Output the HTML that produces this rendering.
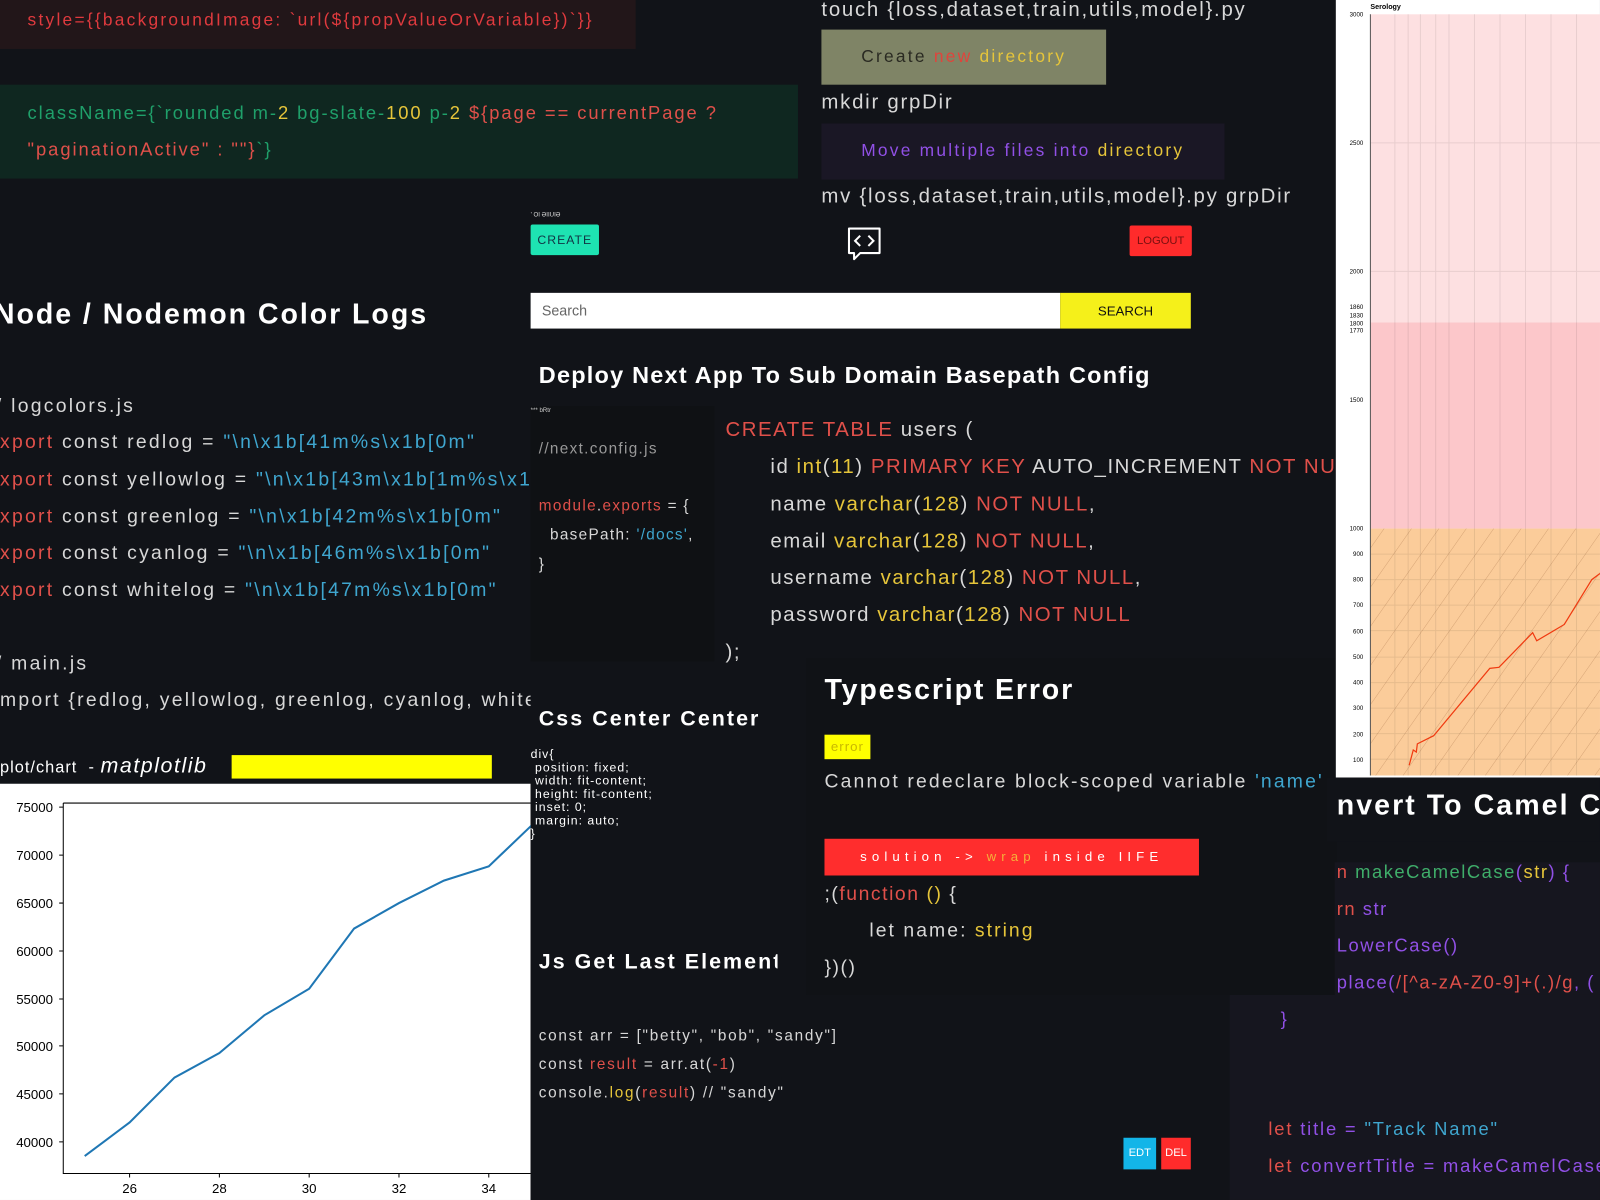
<!DOCTYPE html>
<html><head><meta charset="utf-8"><style>
html,body{margin:0;padding:0;background:#111318;width:1600px;height:1200px;overflow:hidden}
#w{position:absolute;left:0;top:0;width:1568px;height:1176px;transform:scale(1.0204);transform-origin:0 0;font-family:"Liberation Sans",sans-serif;color:#d8d8d8}
.a{position:absolute;white-space:nowrap}
.t{position:absolute;white-space:nowrap;transform:translateY(-50%)}
.r{color:#e0504a}.y{color:#e6c53a}.c{color:#3fa6cf}.g{color:#3fae6a}.p{color:#9150e6}
.code{font-size:19px;letter-spacing:1.5px}
</style></head><body><div id="w">
<div class="a" style="left:0;top:0;width:623px;height:48px;background:#221619"></div>
<div class="t" style="left:27px;top:20px;font-size:17px;letter-spacing:2.2px;color:#e03a3e">style={{backgroundImage: `url(${propValueOrVariable})`}}</div>
<div class="a" style="left:0;top:83px;width:782px;height:92px;background:#0f2720"></div>
<div class="t" style="left:27px;top:111px;font-size:18px;letter-spacing:1.9px;color:#1fa06a">className={`rounded m-<span class="y">2</span> bg-slate-<span class="y">100</span> p-<span class="y">2</span> <span class="r">${page == currentPage ?</span></div>
<div class="t r" style="left:27px;top:147px;font-size:18px;letter-spacing:1.9px">"paginationActive" : ""}<span style="color:#1fa06a">`}</span></div>
<div class="t code" style="left:805px;top:10px;font-size:20px;letter-spacing:1.7px">touch {loss,dataset,train,utils,model}.py</div>
<div class="a" style="left:805px;top:29px;width:279px;height:54px;background:#7f8466"></div>
<div class="t" style="left:844px;top:56px;font-size:17px;letter-spacing:2.2px;color:#2a2a22">Create <span style="color:#e0443c">new</span> <span class="y">directory</span></div>
<div class="t code" style="left:805px;top:101px;font-size:20px;letter-spacing:1.7px">mkdir grpDir</div>
<div class="a" style="left:805px;top:121px;width:395px;height:55px;background:#1a1725"></div>
<div class="t p" style="left:844px;top:148px;font-size:17px;letter-spacing:2.2px">Move multiple files into <span class="y">directory</span></div>
<div class="t code" style="left:805px;top:193px;font-size:20px;letter-spacing:1.7px">mv {loss,dataset,train,utils,model}.py grpDir</div>
<div class="a" style="left:520px;top:208px;font-size:6px;color:#ddd">' OI ƏIIUIƏ</div>
<div class="a" style="left:520px;top:220px;width:67px;height:30px;background:#1ee3b2;border-radius:2px;color:#134;font-size:12px;letter-spacing:1px;line-height:30px;text-align:center">CREATE</div>
<svg class="a" style="left:829px;top:222px" width="36" height="36" viewBox="0 0 36 36"><path d="M3 2h30v24H14l-6 6v-6H3z" fill="none" stroke="#fff" stroke-width="2" stroke-linejoin="round"/><path d="M14 9l-5 5 5 5M22 9l5 5-5 5" fill="none" stroke="#fff" stroke-width="2"/></svg>
<div class="a" style="left:1107px;top:221px;width:61px;height:30px;background:#ff2b2b;border-radius:2px;color:#7a1010;font-size:11px;line-height:30px;text-align:center">LOGOUT</div>
<div class="a" style="left:520px;top:287px;width:519px;height:35px;background:#fff;color:#666;font-size:14px;line-height:35px;text-indent:11px">Search</div>
<div class="a" style="left:1039px;top:287px;width:128px;height:35px;background:#f5f01a;color:#111;font-size:13px;line-height:35px;text-align:center">SEARCH</div>
<div class="t" style="left:528px;top:368px;font-size:23px;font-weight:bold;letter-spacing:1.2px;color:#fff">Deploy Next App To Sub Domain Basepath Config</div>
<div class="a" style="left:520px;top:398px;width:180px;height:250px;background:#0f1114"></div>
<div class="a" style="left:520px;top:400px;font-size:6px;color:#ccc">*** bRtr</div>
<div class="t" style="left:528px;top:440px;font-size:15px;letter-spacing:1.3px;color:#999">//next.config.js</div>
<div class="t" style="left:528px;top:496px;font-size:15px;letter-spacing:1.3px"><span class="r">module</span>.<span class="r">exports</span> = {</div>
<div class="t" style="left:539px;top:524px;font-size:15px;letter-spacing:1.3px">basePath: <span class="c">'/docs'</span>,</div>
<div class="t" style="left:528px;top:553px;font-size:15px">}</div>
<div class="t code" style="left:711px;top:422px;font-size:20px"><span class="r">CREATE TABLE</span> users (</div>
<div class="t code" style="left:755px;top:458px;font-size:20px">id <span class="y">int</span>(<span class="y">11</span>) <span class="r">PRIMARY KEY</span> AUTO_INCREMENT <span class="r">NOT NULL</span></div>
<div class="t code" style="left:755px;top:495px;font-size:20px">name <span class="y">varchar</span>(<span class="y">128</span>) <span class="r">NOT NULL</span>,</div>
<div class="t code" style="left:755px;top:531px;font-size:20px">email <span class="y">varchar</span>(<span class="y">128</span>) <span class="r">NOT NULL</span>,</div>
<div class="t code" style="left:755px;top:567px;font-size:20px">username <span class="y">varchar</span>(<span class="y">128</span>) <span class="r">NOT NULL</span>,</div>
<div class="t code" style="left:755px;top:603px;font-size:20px">password <span class="y">varchar</span>(<span class="y">128</span>) <span class="r">NOT NULL</span></div>
<div class="t code" style="left:711px;top:640px;font-size:20px">);</div>
<div class="t" style="left:-6px;top:308px;font-size:28px;font-weight:bold;letter-spacing:1.9px;color:#fff">Node / Nodemon Color Logs</div>
<div class="t code" style="left:-4px;top:399px;letter-spacing:2.2px">/ logcolors.js</div>
<div class="t code" style="left:0;top:434px;letter-spacing:2.2px"><span class="r">xport</span> const redlog = <span class="c">"\n\x1b[41m%s\x1b[0m"</span></div>
<div class="t code" style="left:0;top:471px;letter-spacing:2.2px"><span class="r">xport</span> const yellowlog = <span class="c">"\n\x1b[43m\x1b[1m%s\x1</span></div>
<div class="t code" style="left:0;top:507px;letter-spacing:2.2px"><span class="r">xport</span> const greenlog = <span class="c">"\n\x1b[42m%s\x1b[0m"</span></div>
<div class="t code" style="left:0;top:543px;letter-spacing:2.2px"><span class="r">xport</span> const cyanlog = <span class="c">"\n\x1b[46m%s\x1b[0m"</span></div>
<div class="t code" style="left:0;top:579px;letter-spacing:2.2px"><span class="r">xport</span> const whitelog = <span class="c">"\n\x1b[47m%s\x1b[0m"</span></div>
<div class="t code" style="left:-4px;top:651px;letter-spacing:2.2px">/ main.js</div>
<div class="t code" style="left:0;top:687px;width:520px;overflow:hidden;letter-spacing:2.2px">mport {redlog, yellowlog, greenlog, cyanlog, white</div>
<div class="t" style="left:0;top:751px;font-size:16px;letter-spacing:1px;color:#fff">plot/chart &nbsp;- <i style="font-size:21px;letter-spacing:1.5px">matplotlib</i></div>
<div class="a" style="left:227px;top:740px;width:255px;height:23px;background:#ffff00"></div>
<svg class="a" style="left:0;top:768px" width="520" height="408" viewBox="0 768 520 408">
<rect x="0" y="768" width="520" height="408" fill="#fff"/>
<path d="M62 787V1150H520M62 787H520" fill="none" stroke="#000" stroke-width="1"/>
<g font-family="Liberation Sans" font-size="13" fill="#000" text-anchor="end">
<text x="52" y="796">75000</text><text x="52" y="843">70000</text><text x="52" y="890">65000</text><text x="52" y="937">60000</text><text x="52" y="984">55000</text><text x="52" y="1030">50000</text><text x="52" y="1077">45000</text><text x="52" y="1124">40000</text>
</g>
<g stroke="#000"><path d="M58 791H62M58 838H62M58 885H62M58 932H62M58 979H62M58 1025H62M58 1072H62M58 1119H62M127 1150v4M215 1150v4M303 1150v4M391 1150v4M479 1150v4"/></g>
<g font-family="Liberation Sans" font-size="13" text-anchor="middle"><text x="127" y="1169">26</text><text x="215" y="1169">28</text><text x="303" y="1169">30</text><text x="391" y="1169">32</text><text x="479" y="1169">34</text></g>
<polyline points="83,1133 127,1100 171,1056 215,1032 259,995 303,969 347,910 391,885 435,863 479,849 523,807" fill="none" stroke="#1f77b4" stroke-width="2"/>
</svg>
<div class="t" style="left:528px;top:705px;font-size:21px;font-weight:bold;letter-spacing:2px;color:#fff">Css Center Center</div>
<div class="a" style="left:520px;top:733px;font-size:12px;letter-spacing:1px;line-height:13px;color:#fff">div{<br>&nbsp;position: fixed;<br>&nbsp;width: fit-content;<br>&nbsp;height: fit-content;<br>&nbsp;inset: 0;<br>&nbsp;margin: auto;<br>}</div>
<div class="t" style="left:528px;top:943px;font-size:21px;font-weight:bold;letter-spacing:2px;color:#fff;width:234px;overflow:hidden">Js Get Last Element</div>
<div class="t" style="left:528px;top:1015px;font-size:15px;letter-spacing:1.7px">const arr = ["betty", "bob", "sandy"]</div>
<div class="t" style="left:528px;top:1043px;font-size:15px;letter-spacing:1.7px">const <span class="r">result</span> = arr.at(<span class="r">-1</span>)</div>
<div class="t" style="left:528px;top:1071px;font-size:15px;letter-spacing:1.7px">console.<span class="y">log</span>(<span class="r">result</span>) // "sandy"</div>
<div class="a" style="left:1101px;top:1115px;width:32px;height:31px;background:#13b5e8;color:#fff;font-size:11px;line-height:31px;text-align:center">EDT</div>
<div class="a" style="left:1138px;top:1115px;width:29px;height:31px;background:#ff2b2b;color:#fff;font-size:11px;line-height:31px;text-align:center">DEL</div>
<div class="a" style="left:790px;top:645px;width:520px;height:330px;background:#101216"></div>
<div class="t" style="left:808px;top:676px;font-size:28px;font-weight:bold;letter-spacing:1.8px;color:#fff">Typescript Error</div>
<div class="a" style="left:808px;top:720px;width:45px;height:24px;background:#ffff00;color:#c9b800;font-size:13px;letter-spacing:1px;line-height:24px;text-align:center">error</div>
<div class="t code" style="left:808px;top:767px;letter-spacing:2.1px">Cannot redeclare block-scoped variable <span class="c">'name'</span></div>
<div class="a" style="left:808px;top:822px;width:367px;height:36px;background:#ff2d2d;color:#fff;font-size:13px;letter-spacing:5px;line-height:36px;text-align:center">solution -&gt; <span style="color:#f5b03a">wrap</span> inside IIFE</div>
<div class="t code" style="left:808px;top:877px">;(<span class="r">function</span> <span class="y">()</span> {</div>
<div class="t code" style="left:852px;top:913px;letter-spacing:2px">let name: <span class="y">string</span></div>
<div class="t code" style="left:808px;top:949px">})()</div>
<svg class="a" style="left:1309px;top:0" width="259" height="762" viewBox="1309 0 259 762">
<defs><pattern id="h" width="22" height="22" patternUnits="userSpaceOnUse" patternTransform="rotate(35)"><path d="M0 0V22" stroke="#b07a50" stroke-width="0.8" opacity="0.6"/></pattern></defs>
<rect x="1309" y="0" width="259" height="762" fill="#fff"/>
<rect x="1343" y="14" width="225" height="302" fill="#fde0e1"/>
<rect x="1343" y="316" width="225" height="202" fill="#fcc7ca"/>
<rect x="1343" y="518" width="225" height="242" fill="#fbcc9a"/>
<rect x="1343" y="518" width="225" height="242" fill="url(#h)"/>
<g stroke="#000" opacity="0.08"><path d="M1367 14V760M1380 14V760M1392 14V760M1407 14V760M1420 14V760M1445 14V760M1470 14V760M1495 14V760M1520 14V760M1545 14V760M1343 140H1568M1343 266H1568M1343 543H1568M1343 568H1568M1343 593H1568M1343 618H1568M1343 644H1568M1343 669H1568M1343 694H1568M1343 719H1568M1343 744H1568"/></g>
<path d="M1343 14V760" stroke="#555"/>
<g font-family="Liberation Sans" font-size="6" text-anchor="end"><text x="1336" y="16">3000</text><text x="1336" y="142">2500</text><text x="1336" y="268">2000</text><text x="1336" y="303">1860</text><text x="1336" y="311">1830</text><text x="1336" y="319">1800</text><text x="1336" y="326">1770</text><text x="1336" y="394">1500</text><text x="1336" y="520">1000</text><text x="1336" y="545">900</text><text x="1336" y="570">800</text><text x="1336" y="595">700</text><text x="1336" y="621">600</text><text x="1336" y="646">500</text><text x="1336" y="671">400</text><text x="1336" y="696">300</text><text x="1336" y="722">200</text><text x="1336" y="747">100</text></g>
<text x="1343" y="9" font-family="Liberation Sans" font-size="7" font-weight="bold">Serology</text>
<polyline points="1381,750 1385,735 1388,737 1389,729 1405,721 1460,655 1469,654 1502,620 1506,628 1533,612 1560,568 1568,562" fill="none" stroke="#f03a10" stroke-width="1.2"/>
</svg>
<div class="a" style="left:1300px;top:762px;width:268px;height:63px;background:#111318"></div>
<div class="t" style="left:1310px;top:789px;font-size:28px;font-weight:bold;letter-spacing:2px;color:#fff">nvert To Camel Case</div>
<div class="a" style="left:1308px;top:845px;width:260px;height:135px;background:#16161f"></div>
<div class="a" style="left:1205px;top:975px;width:363px;height:201px;background:#16161f"></div>
<div class="t code" style="left:1310px;top:855px;font-size:18px"><span class="r">n</span> <span class="g">makeCamelCase</span><span class="p">(</span><span class="y">str</span><span class="p">) {</span></div>
<div class="t code p" style="left:1310px;top:891px;font-size:18px"><span class="r">rn</span> str</div>
<div class="t code p" style="left:1310px;top:927px;font-size:18px">LowerCase()</div>
<div class="t code p" style="left:1310px;top:963px;font-size:18px">place(<span class="r">/[^a-zA-Z0-9]+(.)/g</span>, (</div>
<div class="t code p" style="left:1255px;top:999px;font-size:18px">}</div>
<div class="t code" style="left:1243px;top:1107px;font-size:18px;letter-spacing:1.8px"><span class="r">let</span> <span class="p">title =</span> <span class="c">"Track Name"</span></div>
<div class="t code p" style="left:1243px;top:1143px;font-size:18px;letter-spacing:1.8px"><span class="r">let</span> convertTitle = makeCamelCase</div>
</div></body></html>
